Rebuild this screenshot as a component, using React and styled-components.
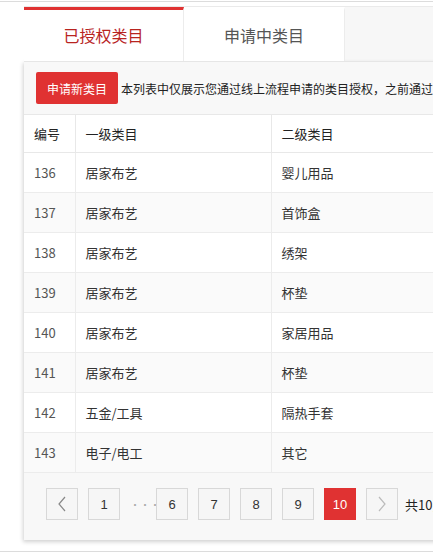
import React from "react";
import styled, { createGlobalStyle } from "styled-components";

const GlobalStyle = createGlobalStyle`
  body {
    margin: 0;
    background: #fff;
    font-family: "Microsoft YaHei", "Noto Sans CJK SC", "Liberation Sans", sans-serif;
    overflow: hidden;
  }
`;

const Page = styled.div`
  width: 433px;
  height: 553px;
  border-top: 1px solid #dcdcdc;
  margin-top: 1px;
  box-sizing: border-box;
  position: relative;
  overflow: hidden;
`;

const Wrap = styled.div`
  margin: 4px 0 0 24px;
  width: 440px;
`;

const Tabs = styled.div`
  display: flex;
  height: 54px;
  border-top: 1px solid #eaeaea;
  background: #f7f7f7;
`;

const Tab = styled.div`
  width: ${(p) => p.w}px;
  box-sizing: border-box;
  display: flex;
  align-items: center;
  justify-content: center;
  font-size: 16px;
  background: #fff;
  color: ${(p) => (p.active ? "#b8241f" : "#555")};
  border-top: 3px solid ${(p) => (p.active ? "#e03232" : "transparent")};
  border-right: 1px solid #ececec;
  padding-bottom: 2px;
`;

const Panel = styled.div`
  background: #f8f8f8;
  border-top: 1px solid #e6e6e6;
  box-shadow: -1px 2px 4px rgba(0, 0, 0, 0.18);
  height: 478px;
`;

const Toolbar = styled.div`
  display: flex;
  align-items: center;
  gap: 3px;
  padding: 10px 12px;
  height: 32px;
`;

const PrimaryButton = styled.button`
  width: 82px;
  height: 32px;
  border: none;
  border-radius: 2px;
  background: #e03232;
  color: #fff;
  font-family: inherit;
  font-size: 12px;
  padding: 0;
  flex-shrink: 0;
`;

const Note = styled.span`
  font-size: 12px;
  color: #222;
  white-space: nowrap;
`;

const Table = styled.table`
  border-collapse: collapse;
  width: 420px;
  background: #fff;
  font-size: 13px;
  table-layout: fixed;
`;

const Th = styled.th`
  text-align: left;
  font-weight: normal;
  color: #222;
  height: 37px;
  padding: 0 10px;
  border: 1px solid #e8e8e8;
  border-left: ${(p) => (p.first ? "none" : "1px solid #e8e8e8")};
`;

const Tr = styled.tr`
  background: ${(p) => (p.odd ? "#fafafa" : "#fff")};
`;

const Td = styled.td`
  height: 39px;
  padding: 0 10px;
  color: ${(p) => (p.muted ? "#555" : "#333")};
  border: 1px solid #ececec;
  border-left: ${(p) => (p.first ? "none" : "1px solid #ececec")};
`;

const Pager = styled.div`
  display: flex;
  align-items: center;
  gap: 10px;
  padding: 15px 0 0 22px;
`;

const PageBtn = styled.div`
  width: 32px;
  height: 32px;
  box-sizing: border-box;
  display: flex;
  align-items: center;
  justify-content: center;
  font-family: "Liberation Sans", Arial, sans-serif;
  font-size: 13px;
  border: 1px solid ${(p) => (p.active ? "#e03232" : "#d8d8d8")};
  background: ${(p) => (p.active ? "#e03232" : "#f6f6f6")};
  color: ${(p) => (p.active ? "#fff" : "#333")};
  flex-shrink: 0;
`;

const Dots = styled.span`
  width: 16px;
  text-align: center;
  color: #aaa;
  font-size: 10px;
  letter-spacing: 0;
  flex-shrink: 0;
`;

const Total = styled.span`
  font-size: 13px;
  color: #222;
  white-space: nowrap;
  margin-left: -3px;
`;

const BottomLine = styled.div`
  position: absolute;
  left: 0;
  right: 0;
  bottom: 2px;
  border-top: 1px solid #dcdcdc;
`;

const rows = [
  [136, "居家布艺", "婴儿用品"],
  [137, "居家布艺", "首饰盒"],
  [138, "居家布艺", "绣架"],
  [139, "居家布艺", "杯垫"],
  [140, "居家布艺", "家居用品"],
  [141, "居家布艺", "杯垫"],
  [142, "五金/工具", "隔热手套"],
  [143, "电子/电工", "其它"],
];

const Arrow = ({ dir }) => (
  <svg width="10" height="16" viewBox="0 0 10 16">
    <path
      d={dir === "left" ? "M8 1 L2 8 L8 15" : "M2 1 L8 8 L2 15"}
      fill="none"
      stroke={dir === "left" ? "#888" : "#bbb"}
      strokeWidth="1.2"
    />
  </svg>
);

export default function App() {
  return (
    <Page>
      <GlobalStyle />
      <Wrap>
        <Tabs>
          <Tab w={160} active>
            已授权类目
          </Tab>
          <Tab w={161}>申请中类目</Tab>
        </Tabs>
        <Panel>
          <Toolbar>
            <PrimaryButton>申请新类目</PrimaryButton>
            <Note>本列表中仅展示您通过线上流程申请的类目授权，之前通过线下申请的类目请联系客服</Note>
          </Toolbar>
          <Table>
            <colgroup>
              <col style={{ width: 51 }} />
              <col style={{ width: 196 }} />
              <col />
            </colgroup>
            <thead>
              <tr>
                <Th first>编号</Th>
                <Th>一级类目</Th>
                <Th>二级类目</Th>
              </tr>
            </thead>
            <tbody>
              {rows.map((r, i) => (
                <Tr key={r[0]} odd={i % 2 === 1}>
                  <Td first muted>
                    {r[0]}
                  </Td>
                  <Td>{r[1]}</Td>
                  <Td>{r[2]}</Td>
                </Tr>
              ))}
            </tbody>
          </Table>
          <Pager>
            <PageBtn>
              <Arrow dir="left" />
            </PageBtn>
            <PageBtn>1</PageBtn>
            <Dots>···</Dots>
            <PageBtn>6</PageBtn>
            <PageBtn>7</PageBtn>
            <PageBtn>8</PageBtn>
            <PageBtn>9</PageBtn>
            <PageBtn active>10</PageBtn>
            <PageBtn>
              <Arrow dir="right" />
            </PageBtn>
            <Total>共10页</Total>
          </Pager>
        </Panel>
      </Wrap>
      <BottomLine />
    </Page>
  );
}
